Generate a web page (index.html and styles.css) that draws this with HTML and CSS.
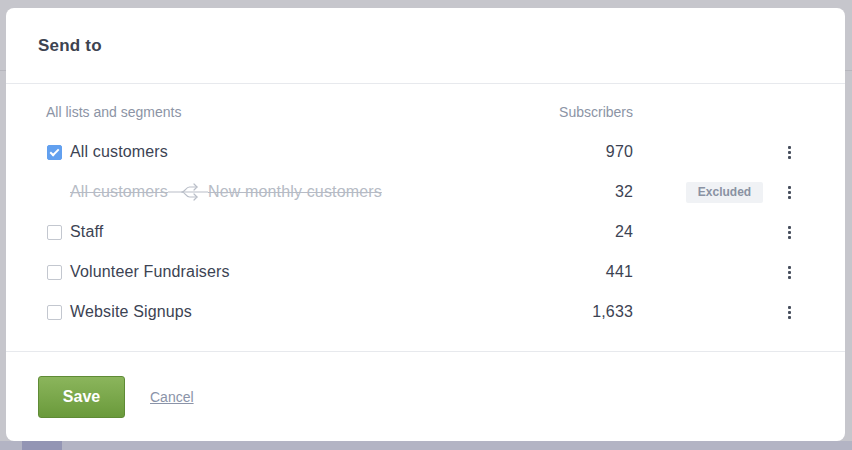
FILE: index.html
```html
<!DOCTYPE html>
<html lang="en">
<head>
  <meta charset="UTF-8">
  <title>Send to</title>
  <link rel="stylesheet" href="styles.css">
</head>
<body>
  <div class="modal">
    <div class="modal-header">
      <h2>Send to</h2>
    </div>

    <div class="modal-body">
      <div class="row head">
        <div class="name">All lists and segments</div>
        <div class="count">Subscribers</div>
        <div class="tag-cell"></div>
        <div class="more"></div>
      </div>

      <div class="row">
        <div class="name"><span class="check on"></span>All customers</div>
        <div class="count">970</div>
        <div class="tag-cell"></div>
        <div class="more"><i></i><i></i><i></i></div>
      </div>

      <div class="row excluded">
        <div class="name"><span class="strike">All customers</span><svg class="split" width="40" height="20" viewBox="0 0 40 20" fill="none" stroke="#b9bec8" stroke-width="1.2" stroke-linecap="round" stroke-linejoin="round"><path d="M0 10H40"/><path d="M14 10C17 10 18 5 21.5 5H29"/><path d="M14 10C17 10 18 15 21.5 15H29"/><path d="M26 2L29 5L26 8"/><path d="M26 12L29 15L26 18"/></svg><span class="strike">New monthly customers</span></div>
        <div class="count">32</div>
        <div class="tag-cell"><span class="tag">Excluded</span></div>
        <div class="more"><i></i><i></i><i></i></div>
      </div>

      <div class="row">
        <div class="name"><span class="check"></span>Staff</div>
        <div class="count">24</div>
        <div class="tag-cell"></div>
        <div class="more"><i></i><i></i><i></i></div>
      </div>

      <div class="row">
        <div class="name"><span class="check"></span>Volunteer Fundraisers</div>
        <div class="count">441</div>
        <div class="tag-cell"></div>
        <div class="more"><i></i><i></i><i></i></div>
      </div>

      <div class="row">
        <div class="name"><span class="check"></span>Website Signups</div>
        <div class="count">1,633</div>
        <div class="tag-cell"></div>
        <div class="more"><i></i><i></i><i></i></div>
      </div>
    </div>

    <div class="modal-footer">
      <button type="submit" class="save">Save</button>
      <a href="#" class="cancel">Cancel</a>
    </div>
  </div>
</body>
</html>
```

FILE: styles.css
```css
html, body {
  height: 100%;
}
body {
  margin: 0;
  padding: 8px 7px 0 6px;
  box-sizing: border-box;
  font-family: "Liberation Sans", Arial, sans-serif;
  color: #3c4353;
  background:
    linear-gradient(#9395b4, #9395b4) 22px 441px / 40px 9px no-repeat,
    linear-gradient(#b3b4c4, #b3b4c4) 0 441px / 100% 9px no-repeat,
    linear-gradient(#b6b6bd, #b6b6bd) 0 70px / 100% 1px no-repeat,
    #c6c6cc;
}
.modal {
  height: 433px;
  background-color: #fff;
  border-radius: 8px;
  display: flex;
  flex-direction: column;
}
.modal-header {
  height: 75px;
  display: flex;
  align-items: center;
  padding: 0 32px;
  border-bottom: 1px solid #e7e9ed;
}
.modal-header h2 {
  margin: 0;
  font-size: 17px;
  font-weight: bold;
  letter-spacing: 0.2px;
  color: #3d4350;
}
.modal-body {
  padding: 8px 54px 19px 40px;
}
.row {
  display: flex;
  align-items: center;
  height: 40px;
  font-size: 16px;
  letter-spacing: 0.15px;
}
.row.head {
  font-size: 14px;
  letter-spacing: 0;
  color: #8c94a5;
}
.name {
  flex: 1;
  display: flex;
  align-items: center;
}
.count {
  width: 120px;
  text-align: right;
}
.tag-cell {
  width: 77px;
  margin-left: 53px;
}
.tag {
  display: block;
  height: 21px;
  line-height: 21px;
  background-color: #f0f2f5;
  border-radius: 2px;
  text-align: center;
  font-size: 12px;
  font-weight: bold;
  letter-spacing: 0;
  color: #8a92a3;
}
.more {
  width: 4px;
  margin-left: 24px;
  display: flex;
  flex-direction: column;
  align-items: center;
  gap: 2px;
}
.more i {
  display: block;
  width: 3px;
  height: 3px;
  border-radius: 1px;
  background-color: #474e5d;
}
.check {
  width: 15px;
  height: 15px;
  box-sizing: border-box;
  border: 1px solid #c3c7cf;
  border-radius: 2px;
  margin: 0 8px 0 1px;
  display: inline-flex;
  align-items: center;
  justify-content: center;
}
.check.on {
  border-color: #62a0ef;
  background-color: #62a0ef;
}
.check.on::after {
  content: "";
  width: 7px;
  height: 3px;
  border-left: 2px solid #fff;
  border-bottom: 2px solid #fff;
  transform: translateY(-1px) rotate(-45deg);
}
.excluded .name {
  padding-left: 24px;
  color: #b6bbc5;
}
.strike {
  text-decoration: line-through;
}
.split {
  display: block;
  flex: none;
  margin-top: -1px;
}
.modal-footer {
  flex: 1;
  display: flex;
  align-items: center;
  padding: 0 32px;
  border-top: 1px solid #e7e9ed;
}
.save {
  width: 87px;
  height: 42px;
  background: linear-gradient(#8bb55c, #6a9a3b);
  border: 1px solid #5f8b35;
  border-radius: 3px;
  color: #fff;
  font-family: inherit;
  font-size: 16px;
  font-weight: bold;
  cursor: pointer;
}
.cancel {
  margin-left: 25px;
  font-size: 14px;
  color: #8a93a8;
}
```
